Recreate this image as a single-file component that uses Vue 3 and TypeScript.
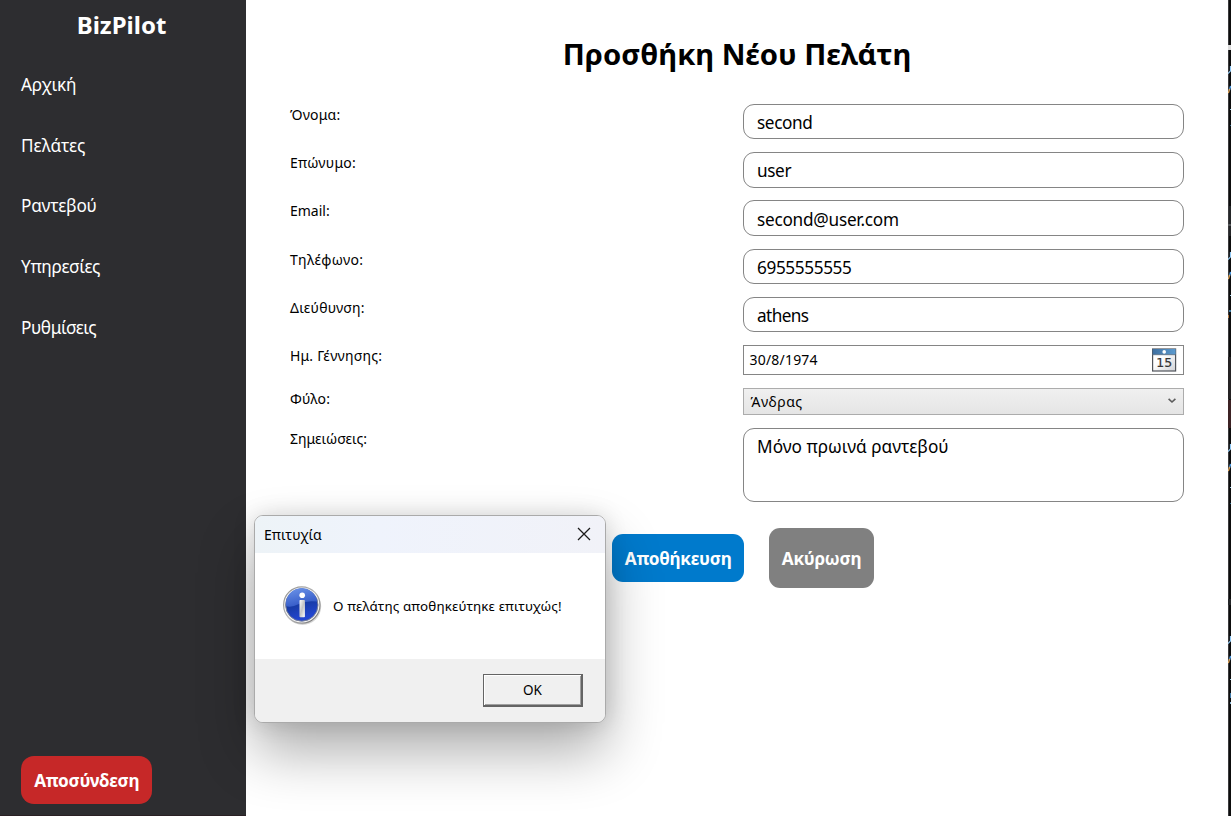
<script setup lang="ts">
import { ref } from 'vue'

interface Field {
  label: string
  value: string
  kind: 'text' | 'date' | 'select' | 'notes'
}

const menu: string[] = ['Αρχική', 'Πελάτες', 'Ραντεβού', 'Υπηρεσίες', 'Ρυθμίσεις']

const fields: Field[] = [
  { label: 'Όνομα:', value: 'second', kind: 'text' },
  { label: 'Επώνυμο:', value: 'user', kind: 'text' },
  { label: 'Email:', value: 'second@user.com', kind: 'text' },
  { label: 'Τηλέφωνο:', value: '6955555555', kind: 'text' },
  { label: 'Διεύθυνση:', value: 'athens', kind: 'text' },
  { label: 'Ημ. Γέννησης:', value: '30/8/1974', kind: 'date' },
  { label: 'Φύλο:', value: 'Άνδρας', kind: 'select' },
  { label: 'Σημειώσεις:', value: 'Μόνο πρωινά ραντεβού', kind: 'notes' },
]

const dialogOpen = ref(true)

// Glyph traces of the editor window that peeks out at the right edge
const traces: number[] = [66, 252, 444, 636]
</script>

<template>
  <div class="window">
    <aside class="sidebar">
      <div class="brand"><span>BizPilot</span></div>
      <nav class="menu">
        <a v-for="item in menu" :key="item" class="menu-item"><span>{{ item }}</span></a>
      </nav>
      <button class="btn logout"><span>Αποσύνδεση</span></button>
    </aside>

    <main class="content">
      <h1><span>Προσθήκη Νέου Πελάτη</span></h1>
      <div class="form">
        <div v-for="f in fields" :key="f.label" class="row" :class="f.kind">
          <label><span>{{ f.label }}</span></label>
          <div class="field">
            <span>{{ f.value }}</span>
            <svg v-if="f.kind === 'date'" class="calendar" width="26" height="24" viewBox="0 0 26 24">
              <defs>
                <linearGradient id="calTop" x1="0" y1="0" x2="1" y2="0">
                  <stop offset="0" stop-color="#3f6f9f" />
                  <stop offset="1" stop-color="#5b9bd0" />
                </linearGradient>
                <linearGradient id="calPage" x1="0" y1="0" x2="1" y2="1">
                  <stop offset="0.4" stop-color="#ffffff" />
                  <stop offset="1" stop-color="#cfd1d6" />
                </linearGradient>
              </defs>
              <rect x="1.6" y="1" width="23" height="22" fill="url(#calPage)" stroke="#50545a" stroke-width="1.2" />
              <rect x="1.6" y="1" width="23" height="5.6" fill="url(#calTop)" />
              <path d="M1 6.7H25" stroke="#50657a" stroke-width=".8" />
              <circle cx="13.2" cy="3.9" r="1.8" fill="#fff" />
              <text x="13.3" y="19.3" text-anchor="middle" class="calendar-day">15</text>
            </svg>
            <svg v-if="f.kind === 'select'" class="chevron" width="8" height="6" viewBox="0 0 8 6">
              <path d="M.6 .8 4 4 7.4 .8" fill="none" stroke="#5c5c5c" stroke-width="1.6" />
            </svg>
          </div>
        </div>
      </div>
      <div class="actions">
        <button class="btn save"><span>Αποθήκευση</span></button>
        <button class="btn cancel"><span>Ακύρωση</span></button>
      </div>
    </main>

    <svg class="edge" width="3" height="816" viewBox="0 0 3 816">
      <rect width="3" height="816" fill="#0d0d0d" />
      <rect width="1" height="816" fill="#3a3a3c" />
      <rect y="45" width="3" height="5" fill="#dcdcdc" />
      <rect x="1" y="206" width="2" height="30" fill="#242628" />
      <rect y="224" width="3" height="2" fill="#55585a" />
      <rect y="357" width="3" height="42" fill="#252324" />
      <rect y="400" width="3" height="28" fill="#3c2224" />
      <rect y="599" width="3" height="6" fill="#252729" />
      <g v-for="y in traces" :key="y">
        <path :d="`M2.5 ${y}v5L0 ${y + 7.5}`" fill="none" stroke="#8fc8f4" stroke-width="1.2" />
        <path :d="`M2.6 ${y + 20}L1.5 ${y + 24}`" stroke="#4f9be0" stroke-width="1.4" />
        <path :d="`M1.6 ${y + 23}L.4 ${y + 27}`" stroke="#e0a457" stroke-width="1.3" />
        <rect x="2" :y="y + 43" width="1" height="1" fill="#9ccfe8" />
        <rect x="2" :y="y + 59" width="1" height="1" fill="#316987" />
      </g>
      <rect x="1" y="310" width="2" height="2" fill="#3e789d" />
      <rect y="315" width="1" height="3" fill="#b27b43" />
      <rect x="2" y="693" width="1" height="5" fill="#3e78a5" />
      <rect x="2" y="702" width="1" height="2" fill="#8db7d2" />
    </svg>

    <section v-if="dialogOpen" class="dialog" role="dialog">
      <header class="dialog-title">
        <span>Επιτυχία</span>
        <svg class="close" width="14" height="14" viewBox="0 0 14 14" @click="dialogOpen = false">
          <path d="M1 1 13 13M13 1 1 13" stroke="#1b1b1b" stroke-width="1.25" fill="none" />
        </svg>
      </header>
      <div class="dialog-body">
        <svg class="info" width="40" height="40" viewBox="0 0 40 40">
          <defs>
            <linearGradient id="ring" x1="0" y1="0" x2="1" y2="1">
              <stop offset="0" stop-color="#8b8b8b" />
              <stop offset=".5" stop-color="#b9b9b9" />
              <stop offset="1" stop-color="#686868" />
            </linearGradient>
            <linearGradient id="ball" x1="0" y1="0" x2=".3" y2="1">
              <stop offset="0" stop-color="#3f68cf" />
              <stop offset=".55" stop-color="#173ba5" />
              <stop offset="1" stop-color="#2346d2" />
            </linearGradient>
            <linearGradient id="gloss" x1="0" y1="0" x2=".4" y2="1">
              <stop offset="0" stop-color="#6e96ea" />
              <stop offset="1" stop-color="#3359c6" />
            </linearGradient>
            <linearGradient id="stem" x1="0" y1="0" x2="1" y2="1">
              <stop offset="0" stop-color="#ffffff" />
              <stop offset=".5" stop-color="#c5c5c5" />
              <stop offset="1" stop-color="#ffffff" />
            </linearGradient>
          </defs>
          <circle cx="20.6" cy="20.4" r="18.6" fill="#000" opacity=".16" />
          <circle cx="19.8" cy="19" r="18.2" fill="#f4f4f4" stroke="url(#ring)" stroke-width="1.2" />
          <circle cx="19.8" cy="19" r="16.2" fill="url(#ball)" stroke="#777f96" stroke-width="1" />
          <path d="M4.1 20A15.7 15.7 0 0 1 35.2 15.6Q25 14 17 18T4.1 20Z" fill="url(#gloss)" />
          <circle cx="20.2" cy="9.2" r="2.8" fill="#fff" />
          <rect x="17.5" y="13.9" width="5.4" height="17.3" rx=".8" fill="url(#stem)" />
        </svg>
        <span>Ο πελάτης αποθηκεύτηκε επιτυχώς!</span>
      </div>
      <footer class="dialog-footer">
        <button class="ok" @click="dialogOpen = false"><span>OK</span></button>
      </footer>
    </section>
  </div>
</template>

<style>
body {
  margin: 0;
  overflow: hidden;
}
</style>

<style scoped>
.window {
  position: relative;
  display: flex;
  width: 1231px;
  height: 816px;
  overflow: hidden;
  background: #fff;
  color: #000;
  font-family: "Noto Sans", "Open Sans", sans-serif;
}

span {
  white-space: nowrap;
}

.sidebar {
  display: flex;
  flex-direction: column;
  box-sizing: border-box;
  width: 246px;
  height: 816px;
  padding-bottom: 11px;
  border-bottom: 1px solid #2a2024;
  background: #2d2d30;
  color: #fff;
}

.brand {
  height: 55px;
  padding-right: 3px;
  text-align: center;
  font-size: 24px;
  font-weight: 700;
  line-height: 50px;
}

.menu {
  flex: 1;
}

.menu-item {
  display: block;
  height: 60.7px;
  padding-left: 21px;
  font-size: 17.2px;
  letter-spacing: -0.2px;
  line-height: 60px;
}

.menu-item:nth-child(2) {
  letter-spacing: 0;
}

.menu-item:nth-child(4) {
  letter-spacing: -0.3px;
}

.menu-item:nth-child(5) {
  letter-spacing: -0.42px;
}

.btn {
  display: flex;
  align-items: center;
  justify-content: center;
  padding: 0;
  border: 0;
  border-radius: 11px;
  color: #fff;
  font-family: inherit;
  font-size: 17.2px;
  font-weight: 700;
  letter-spacing: -0.28px;
}

.logout {
  width: 131.4px;
  height: 48px;
  margin-left: 21px;
  border-radius: 13px;
  background: #c62828;
}

.content {
  width: 982px;
}

h1 {
  height: 103.8px;
  margin: 0;
  text-align: center;
  font-size: 29.25px;
  line-height: 109px;
}

.form {
  display: flex;
  flex-direction: column;
  gap: 12.75px;
  padding: 0 44px;
}

.row {
  display: flex;
  justify-content: space-between;
  height: 35.5px;
}

.row.date {
  height: 30px;
}

.row.select {
  height: 27px;
}

.row.notes {
  height: 74.5px;
}

label {
  height: 22px;
  font-size: 14px;
  letter-spacing: 0.22px;
  line-height: 22.6px;
}

.row:nth-child(3) label,
.notes label {
  letter-spacing: 0;
}

.row:nth-child(4) label {
  letter-spacing: 0.32px;
}

.row:nth-child(4) label,
.notes label {
  padding-top: 0.4px;
}

.field {
  display: flex;
  align-items: center;
  box-sizing: border-box;
  width: 441px;
  padding: 2px 13px 0;
  border: 1px solid #858585;
  border-radius: 11px;
  background: #fff;
  font-size: 17.2px;
  letter-spacing: -0.38px;
}

.row:nth-child(3) .field {
  letter-spacing: -0.24px;
}

.row:nth-child(5) .field {
  letter-spacing: -0.6px;
}

.date .field {
  justify-content: space-between;
  padding: 0 6px 0 5.5px;
  border-radius: 0;
  font-size: 14px;
  letter-spacing: 0.2px;
}

.date .field span {
  padding-bottom: 1px;
}

.select .field {
  justify-content: space-between;
  padding: 0 7px 0 6.5px;
  border-color: #acacac;
  border-radius: 0;
  background: linear-gradient(#f0f0f0, #e5e5e5);
  font-size: 14px;
  letter-spacing: 0.5px;
}

.chevron {
  margin-bottom: 1px;
}

.notes .field {
  align-items: flex-start;
  padding-top: 6.7px;
  letter-spacing: 0.04px;
}

.calendar-day {
  fill: #333;
  font-family: "DejaVu Sans", sans-serif;
  font-size: 12.5px;
  font-weight: 400;
  letter-spacing: 0;
  stroke: #333;
  stroke-width: 0.2px;
}

.actions {
  display: flex;
  align-items: center;
  gap: 25px;
  height: 60.5px;
  margin: 25.6px 0 0 366.4px;
}

.save {
  width: 131.6px;
  height: 48px;
  background: #007acc;
}

.cancel {
  width: 105px;
  height: 60.5px;
  background: #808080;
}

.save span,
.cancel span {
  padding-top: 1px;
}

.edge {
  display: block;
}

.dialog {
  position: absolute;
  left: 254px;
  top: 515px;
  display: flex;
  flex-direction: column;
  box-sizing: border-box;
  width: 352px;
  height: 208px;
  overflow: hidden;
  border: 1px solid #aaa;
  border-radius: 9px;
  background: #fff;
  box-shadow: 0 29px 56px rgba(0, 0, 0, 0.32), 0 0 22px rgba(0, 0, 0, 0.13);
}

.dialog-title {
  display: flex;
  align-items: center;
  justify-content: space-between;
  height: 37px;
  padding: 0 14px 0 9px;
  background: linear-gradient(90deg, #edf3f7, #eff3fc 35%, #f1f2f8);
  font-size: 14px;
}

.close {
  margin-bottom: 2px;
}

.dialog-body {
  display: flex;
  align-items: center;
  gap: 11px;
  height: 106px;
  padding-left: 27px;
  font-size: 13.4px;
  letter-spacing: 0.13px;
}

.dialog-footer {
  display: flex;
  flex: 1;
  align-items: flex-start;
  justify-content: flex-end;
  padding: 15px 22px 0 0;
  background: #f0f0f0;
}

.ok {
  width: 100px;
  height: 33px;
  padding: 0;
  border: 1px solid #646464;
  border-right-width: 2px;
  border-bottom-width: 2px;
  background: #f0f0f0;
  box-shadow: inset 1px 1px #fff, inset -1px -1px #a0a0a0;
  color: #000;
  font-family: inherit;
  font-size: 13.5px;
}
</style>
